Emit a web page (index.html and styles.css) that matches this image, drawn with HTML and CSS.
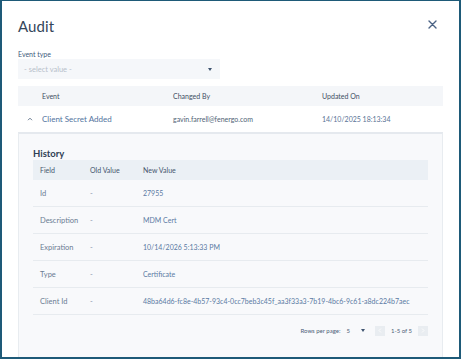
FILE: index.html
```html
<!DOCTYPE html>
<html>
<head>
<meta charset="utf-8">
<link rel="stylesheet" href="styles.css">
</head>
<body>
<div class="frame">
  <div class="modal">
    <div class="head">
      <h1 class="title">Audit</h1>
      <button class="close" aria-label="Close">
        <svg width="9" height="9" viewBox="0 0 9 9"><path d="M1 1L8 8M8 1L1 8" stroke="#4b6385" stroke-width="1.4" stroke-linecap="round"/></svg>
      </button>
    </div>
    <div class="field">
      <label class="label">Event type</label>
      <div class="select">
        <span class="placeholder">- select value -</span>
        <span class="caret"></span>
      </div>
    </div>
    <div class="table">
      <div class="thead">
        <span></span><span>Event</span><span>Changed By</span><span>Updated On</span>
      </div>
      <div class="trow">
        <span class="chev"><svg width="6" height="4" viewBox="0 0 6 4"><path d="M1 3.2L3 1.2L5 3.2" fill="none" stroke="#5a6d86" stroke-width="0.9"/></svg></span>
        <span class="ev">Client Secret Added</span>
        <span class="by">gavin.farrell@fenergo.com</span>
        <span class="on">14/10/2025 18:13:34</span>
      </div>
      <div class="panel">
        <div class="htitle">History</div>
        <div class="htable">
          <div class="hhead"><span>Field</span><span>Old Value</span><span>New Value</span></div>
          <div class="hrow"><span class="f">Id</span><span class="o">-</span><span class="v">27955</span></div>
          <div class="hrow"><span class="f">Description</span><span class="o">-</span><span class="v">MDM Cert</span></div>
          <div class="hrow"><span class="f">Expiration</span><span class="o">-</span><span class="v">10/14/2026 5:13:33 PM</span></div>
          <div class="hrow"><span class="f">Type</span><span class="o">-</span><span class="v">Certificate</span></div>
          <div class="hrow"><span class="f">Client Id</span><span class="o">-</span><span class="v">48ba64d6-fc8e-4b57-93c4-0cc7beb3c45f_aa3f33a3-7b19-4bc6-9c61-a8dc224b7aec</span></div>
        </div>
        <div class="pager">
          <span class="rpp">Rows per page:</span>
          <span class="num">5</span>
          <span class="pcaret"></span>
          <span class="pbtn"><svg width="4" height="5" viewBox="0 0 4 5"><path d="M3 0.5L1 2.5L3 4.5" fill="none" stroke="#fff" stroke-width="0.8"/></svg></span>
          <span class="range">1-5 of 5</span>
          <span class="pbtn"><svg width="4" height="5" viewBox="0 0 4 5"><path d="M1 0.5L3 2.5L1 4.5" fill="none" stroke="#fff" stroke-width="0.8"/></svg></span>
        </div>
      </div>
    </div>
  </div>
</div>
</body>
</html>
```

FILE: styles.css
```css
* { box-sizing: border-box; }
html, body { margin: 0; padding: 0; }
body {
  width: 461px;
  height: 359px;
  overflow: hidden;
  font-family: Lato, "Open Sans", sans-serif;
  background: #fff;
}
.frame {
  width: 461px;
  height: 359px;
  border-top: 1px solid #1e5a78;
  border-left: 2px solid #1e5a78;
  border-right: 2px solid #1e5a78;
  border-bottom: 2px solid #1e5a78;
  overflow: hidden;
  background: #fff;
}
.modal {
  padding: 0 16px 0 16px;
  display: flex;
  flex-direction: column;
}
.head {
  display: flex;
  justify-content: space-between;
  align-items: center;
  height: 48px;
  padding-top: 2px;
}
.title {
  margin: 0;
  font-weight: 400;
  font-size: 15px;
  color: #34465a;
  letter-spacing: 0.1px;
}
.close {
  border: 0;
  background: none;
  padding: 0;
  width: 9px;
  height: 9px;
  margin-right: 6px;
  margin-top: -3px;
  display: flex;
}
.field { display: flex; flex-direction: column; }
.label {
  font-size: 7px;
  color: #3c5a7d;
  height: 10px;
  line-height: 10px;
}
.select {
  width: 202px;
  height: 20px;
  background: #f5f7fa;
  display: flex;
  align-items: center;
  justify-content: space-between;
  padding: 0 8px 0 6px;
}
.placeholder { font-size: 7.5px; color: #b7bfca; }
.caret {
  width: 0; height: 0;
  border-left: 2.5px solid transparent;
  border-right: 2.5px solid transparent;
  border-top: 3px solid #3f5470;
}
.table { margin-top: 7px; width: 425px; }
.thead, .trow {
  display: grid;
  grid-template-columns: 24px 131px 149px 1fr;
  align-items: center;
}
.thead {
  height: 20px;
  background: #f4f6f9;
  font-size: 7px;
  color: #3e4e63;
}
.trow { height: 26px; font-size: 7px; color: #4f5f75; }
.chev { display: flex; justify-content: center; }
.ev { font-size: 8px; color: #5274a0; }
.on { color: #5a7396; }
.panel {
  background: #f8f9fb;
  border-top: 2px solid #e5e9ee;
  border-left: 1px solid #e8ecf0;
  border-right: 1px solid #e8ecf0;
  padding: 14px 14px 0 14px;
  height: 230px;
}
.htitle {
  font-weight: 700;
  font-size: 9.5px;
  color: #2f4155;
  height: 12px;
  line-height: 12px;
}
.hhead, .hrow {
  display: grid;
  grid-template-columns: 50px 53px 1fr;
  align-items: center;
  padding-left: 7px;
}
.hhead {
  height: 20px;
  background: #ebf0f5;
  font-size: 7px;
  color: #45566d;
}
.hrow {
  height: 27px;
  border-bottom: 1px solid #e7ebef;
  font-size: 7.5px;
}
.f { color: #6b7c93; }
.o { color: #8797ad; }
.v { color: #5a7aa3; font-size: 7px; white-space: nowrap; }
.pager {
  display: flex;
  justify-content: flex-end;
  align-items: center;
  height: 31px;
  font-size: 6px;
  color: #4d6079;
}
.rpp { margin-right: 6px; }
.num { margin-right: 11px; }
.pcaret {
  width: 0; height: 0;
  border-left: 2px solid transparent;
  border-right: 2px solid transparent;
  border-top: 3px solid #3f5470;
  margin-right: 10px;
}
.pbtn {
  width: 10px; height: 10px;
  background: #e9edf1;
  display: flex; align-items: center; justify-content: center;
}
.range { margin: 0 6px; }
```
